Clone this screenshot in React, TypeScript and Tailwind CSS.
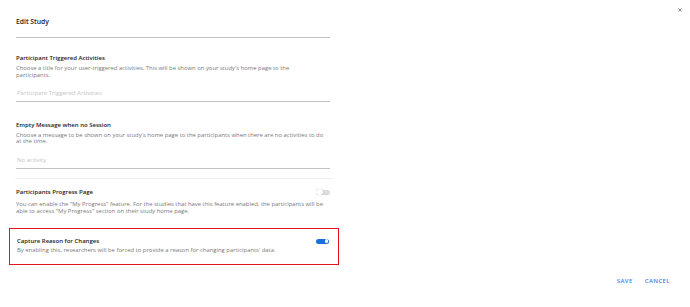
import React from 'react';

interface ToggleProps {
  on?: boolean;
}

function Toggle({ on }: ToggleProps) {
  return (
    <div
      className={
        on
          ? 'relative h-[5px] w-[13px] rounded-full bg-[#1a6fe0]'
          : 'relative h-[5px] w-[13px] rounded-full bg-[#dcdcdc]'
      }
    >
      <div
        className={
          on
            ? 'absolute right-[1px] top-[0.75px] h-[3.5px] w-[3.5px] rounded-full bg-white'
            : 'absolute left-[-1px] top-[-0.75px] h-[6.5px] w-[6.5px] rounded-full bg-white shadow-[0_0_1px_rgba(0,0,0,0.35)]'
        }
      />
    </div>
  );
}

interface FieldProps {
  title: string;
  description: React.ReactNode;
  placeholder: string;
}

function TextField({ title, description, placeholder }: FieldProps) {
  return (
    <div>
      <div className="text-[6px] leading-[7px] font-semibold text-[#222]">{title}</div>
      <p className="mt-[3px] text-[5.9px] leading-[6.5px] text-[#7a7a7a]">{description}</p>
      <div className="mt-[12px] border-b border-[#c2c2c2] pb-[4px] pl-[1px] text-[6px] leading-[7px] text-[#c4c4c4]">
        {placeholder}
      </div>
    </div>
  );
}

export default function App() {
  return (
    <div
      className="relative h-[307px] w-[690px] overflow-hidden bg-white"
      style={{ fontFamily: '"Open Sans", "Noto Sans", sans-serif' }}
    >
      <button className="absolute right-[8px] top-[8px] text-[#555]">
        <svg width="4" height="4" viewBox="0 0 10 10" stroke="currentColor" strokeWidth="1.8">
          <path d="M1 1 L9 9 M9 1 L1 9" />
        </svg>
      </button>

      <div className="ml-[16px] w-[314px] pt-[18px]">
        <div className="text-[6.8px] leading-[8px] font-semibold text-[#222]">Edit Study</div>
        <div className="mt-[11px] h-px bg-[#c4c4c4]" />

        <div className="mt-[17px]">
          <TextField
            title="Participant Triggered Activities"
            description={
              <>
                Choose a title for your user-triggered activities. This will be shown on your study's home page to the
                <br />
                participants.
              </>
            }
            placeholder="Participant Triggered Activities"
          />
        </div>

        <div className="mt-[19.5px]">
          <TextField
            title="Empty Message when no Session"
            description="Choose a message to be shown on your study's home page to the participants when there are no activities to do at the time."
            placeholder="No activity"
          />
        </div>

        <div className="ml-[-1px] mt-[9px] h-px w-[318px] bg-[#f0f0f0]" />

        <div className="mt-[10px]">
          <div className="flex items-center justify-between">
            <div className="text-[6px] leading-[7px] font-semibold text-[#222]">Participants Progress Page</div>
            <Toggle />
          </div>
          <p className="mt-[5px] text-[5.9px] leading-[7.5px] text-[#7a7a7a]">
            You can enable the "My Progress" feature. For the studies that have this feature enabled, the participants
            will be able to access "My Progress" section on their study home page.
          </p>
        </div>

        <div className="ml-[-7px] mt-[12px] w-[330px] border border-[#e3141c] pb-[10px] pl-[7px] pr-[9px] pt-[9px]">
          <div className="flex items-center justify-between">
            <div className="text-[6px] leading-[7px] font-semibold text-[#222]">Capture Reason for Changes</div>
            <Toggle on />
          </div>
          <p className="mt-[2.5px] text-[5.9px] leading-[7px] text-[#7a7a7a]">
            By enabling this, researchers will be forced to provide a reason for changing participants' data.
          </p>
        </div>
      </div>

      <div className="mt-[13px] flex justify-end gap-[12px] pr-[20px]">
        <button className="text-[6px] leading-[7px] font-semibold tracking-[0.4px] text-[#3d7ef5]">SAVE</button>
        <button className="text-[6px] leading-[7px] font-semibold tracking-[0.4px] text-[#3d7ef5]">CANCEL</button>
      </div>
    </div>
  );
}
